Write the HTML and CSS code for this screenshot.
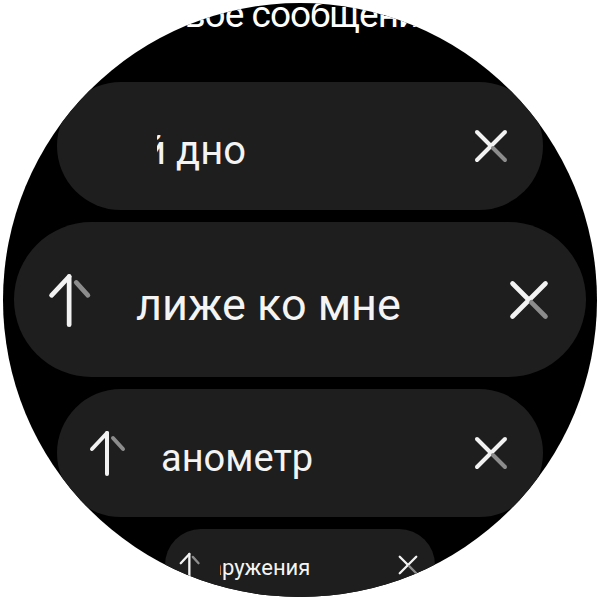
FILE: index.html
```html
<!DOCTYPE html>
<html lang="ru">
<head>
    <meta charset="UTF-8">
    <meta name="viewport" content="width=device-width, initial-scale=1.0">
    <title>Новое сообщение</title>
    <link rel="stylesheet" href="styles.css">
</head>
<body>
    <div class="watch">
        <div class="title">Новое сообщение</div>

        <div class="list">
            <div class="pill pill-md no-arrow">
                <div class="label"><span class="cut-one">й дно</span></div>
                <svg class="icon-x" viewBox="0 0 34 34">
                    <line x1="31" y1="3" x2="3" y2="31" class="stroke-main"/>
                    <line x1="3" y1="3" x2="17" y2="17" class="stroke-main"/>
                    <line x1="19" y1="19" x2="31" y2="31" class="stroke-dim"/>
                </svg>
            </div>

            <div class="pill pill-lg">
                <svg class="icon-up" viewBox="0 0 40 46">
                    <line x1="18" y1="3" x2="18" y2="44" class="stroke-main"/>
                    <line x1="18" y1="3" x2="3" y2="19" class="stroke-main"/>
                    <line x1="24" y1="8" x2="34" y2="19" class="stroke-dim"/>
                </svg>
                <div class="label"><span>лиже ко мне</span></div>
                <svg class="icon-x" viewBox="0 0 34 34">
                    <line x1="31" y1="3" x2="3" y2="31" class="stroke-main"/>
                    <line x1="3" y1="3" x2="17" y2="17" class="stroke-main"/>
                    <line x1="19" y1="19" x2="31" y2="31" class="stroke-dim"/>
                </svg>
            </div>

            <div class="pill pill-md">
                <svg class="icon-up" viewBox="0 0 40 46">
                    <line x1="18" y1="3" x2="18" y2="44" class="stroke-main"/>
                    <line x1="18" y1="3" x2="3" y2="19" class="stroke-main"/>
                    <line x1="24" y1="8" x2="34" y2="19" class="stroke-dim"/>
                </svg>
                <div class="label"><span>анометр</span></div>
                <svg class="icon-x" viewBox="0 0 34 34">
                    <line x1="31" y1="3" x2="3" y2="31" class="stroke-main"/>
                    <line x1="3" y1="3" x2="17" y2="17" class="stroke-main"/>
                    <line x1="19" y1="19" x2="31" y2="31" class="stroke-dim"/>
                </svg>
            </div>

            <div class="pill pill-sm">
                <svg class="icon-up" viewBox="0 0 40 46">
                    <line x1="18" y1="3" x2="18" y2="44" class="stroke-main"/>
                    <line x1="18" y1="3" x2="3" y2="19" class="stroke-main"/>
                    <line x1="24" y1="8" x2="34" y2="19" class="stroke-dim"/>
                </svg>
                <div class="label"><span class="cut-two">аружения</span></div>
                <svg class="icon-x" viewBox="0 0 34 34">
                    <line x1="31" y1="3" x2="3" y2="31" class="stroke-main"/>
                    <line x1="3" y1="3" x2="17" y2="17" class="stroke-main"/>
                    <line x1="19" y1="19" x2="31" y2="31" class="stroke-dim"/>
                </svg>
            </div>
        </div>
    </div>
</body>
</html>
```

FILE: styles.css
```css
body {
    margin: 0;
    background-color: #ffffff;
    font-family: Roboto, "Noto Sans", Arial, sans-serif;
}
.watch {
    width: 594px;
    height: 594px;
    margin: 3px;
    border-radius: 50%;
    background-color: #000000;
    overflow: hidden;
    display: flex;
    flex-direction: column;
    align-items: center;
}
.title {
    color: #ffffff;
    font-size: 37px;
    line-height: 34px;
    height: 34px;
    margin: -5px 24px 50px 0;
    letter-spacing: -1px;
    white-space: nowrap;
}
.list {
    display: flex;
    flex-direction: column;
    align-items: center;
    gap: 12px;
}
.pill {
    flex-shrink: 0;
    display: flex;
    align-items: center;
    box-sizing: border-box;
    background-color: #1e1e1e;
    color: #f4f4f4;
}
.label {
    flex: 1;
    overflow: hidden;
    white-space: nowrap;
    padding-top: 9px;
}
.cut-one {
    margin-left: -14px;
}
.cut-two {
    margin-left: -10px;
}
.stroke-main {
    stroke: #f2f2f2;
    stroke-width: 4;
    stroke-linecap: round;
}
.stroke-dim {
    stroke: #8c8c8c;
    stroke-width: 4;
    stroke-linecap: round;
}
.icon-up,
.icon-x {
    flex-shrink: 0;
}

/* middle-sized rows */
.pill-md {
    width: 486px;
    height: 128px;
    border-radius: 64px;
    padding: 0 35px 0 32px;
    font-size: 38px;
}
.pill-md .icon-up {
    width: 40px;
    height: 46px;
    margin-right: 32px;
}
.pill-md .icon-x {
    width: 34px;
    height: 34px;
}
.pill-md.no-arrow {
    padding-left: 100px;
    font-size: 40px;
}

/* focused row */
.pill-lg {
    width: 572px;
    height: 155px;
    border-radius: 78px;
    padding: 0 37px 0 34px;
    font-size: 45px;
}
.pill-lg .icon-up {
    width: 47px;
    height: 54px;
    margin-right: 41px;
}
.pill-lg .icon-x {
    width: 40px;
    height: 40px;
}

/* bottom row */
.pill-sm {
    width: 270px;
    height: 72px;
    border-radius: 36px;
    padding: 0 17px 0 14px;
    font-size: 22px;
}
.pill-sm .icon-up {
    width: 23px;
    height: 27px;
    margin-right: 18px;
}
.pill-sm .icon-x {
    width: 20px;
    height: 20px;
}
.pill-sm .label {
    padding-top: 4px;
}
```
